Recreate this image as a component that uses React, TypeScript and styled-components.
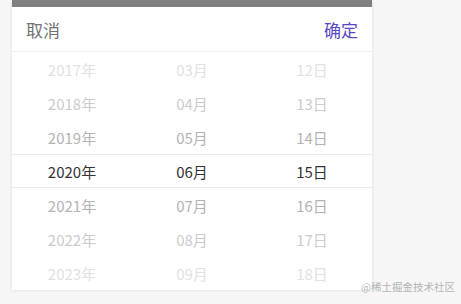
import React from "react";
import styled, { createGlobalStyle } from "styled-components";

const Global = createGlobalStyle`
  html, body { margin: 0; padding: 0; }
  body {
    background: #f6f6f6;
    font-family: "Noto Sans CJK SC", "Noto Sans", sans-serif;
    width: 461px;
    height: 304px;
    overflow: hidden;
  }
`;

const Page = styled.div`
  position: relative;
  width: 461px;
  height: 304px;
  padding-left: 12px;
  box-sizing: border-box;
`;

const Panel = styled.div`
  width: 360px;
  background: #fff;
  box-shadow: 0 0 3px rgba(0, 0, 0, 0.12);
  display: flex;
  flex-direction: column;
`;

const TopBar = styled.div`
  height: 7px;
  background: #808080;
`;

const Header = styled.div`
  height: 44px;
  display: flex;
  align-items: center;
  justify-content: space-between;
  padding: 0 14px;
  border-bottom: 1px solid #f0f0f0;
  font-size: 17px;
`;

const Action = styled.span<{ $primary?: boolean }>`
  color: ${(p) => (p.$primary ? "#5847c6" : "#707070")};
  line-height: 1;
  padding-top: 1px;
`;

const Picker = styled.div`
  position: relative;
  display: grid;
  grid-template-columns: repeat(3, 1fr);
  height: 238px;
`;

const Highlight = styled.div`
  position: absolute;
  left: 0;
  right: 0;
  top: 102px;
  height: 34px;
  border-top: 1px solid #ececec;
  border-bottom: 1px solid #ececec;
  box-sizing: border-box;
  pointer-events: none;
`;

const Column = styled.div`
  display: flex;
  flex-direction: column;
`;

const colors = ["#333", "#b3b3b3", "#cbcbcb", "#e2e2e2"];

const Item = styled.div<{ $dist: number }>`
  height: 34px;
  display: flex;
  align-items: center;
  justify-content: center;
  font-size: 15px;
  color: ${(p) => colors[p.$dist]};
`;

const Watermark = styled.div`
  position: absolute;
  right: 6px;
  bottom: 10px;
  font-size: 10.5px;
  color: #b4b4b4;
  font-family: "Noto Sans CJK SC", sans-serif;
`;

const years = [2017, 2018, 2019, 2020, 2021, 2022, 2023].map((y) => `${y}年`);
const months = ["03", "04", "05", "06", "07", "08", "09"].map((m) => `${m}月`);
const days = [12, 13, 14, 15, 16, 17, 18].map((d) => `${d}日`);

export default function App() {
  return (
    <>
      <Global />
      <Page>
        <Panel>
          <TopBar />
          <Header>
            <Action>取消</Action>
            <Action $primary>确定</Action>
          </Header>
          <Picker>
            <Highlight />
            {[years, months, days].map((col, ci) => (
              <Column key={ci}>
                {col.map((t, i) => (
                  <Item key={t} $dist={Math.abs(i - 3)}>
                    {t}
                  </Item>
                ))}
              </Column>
            ))}
          </Picker>
        </Panel>
        <Watermark>@稀土掘金技术社区</Watermark>
      </Page>
    </>
  );
}
